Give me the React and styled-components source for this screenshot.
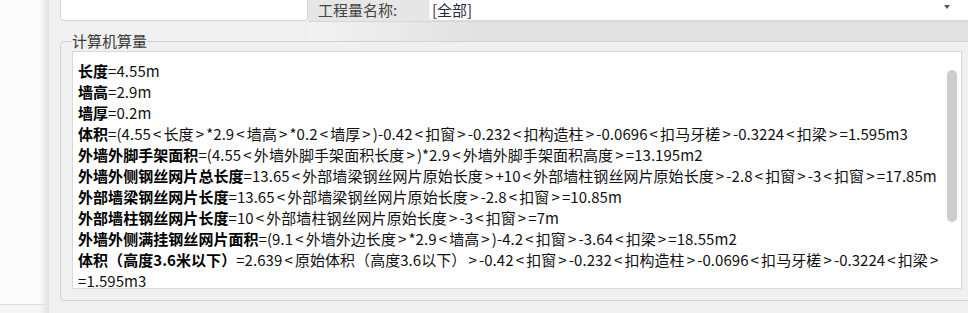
import React from 'react'
import styled, { createGlobalStyle } from 'styled-components'

const GlobalStyle = createGlobalStyle`
  html, body {
    margin: 0;
    padding: 0;
    background: #fafafa;
    font-family: "Noto Sans CJK SC", "Noto Sans", sans-serif;
  }
`

const lines = [
  ['长度', '=4.55m'],
  ['墙高', '=2.9m'],
  ['墙厚', '=0.2m'],
  ['体积', '=(4.55<长度>*2.9<墙高>*0.2<墙厚>)-0.42<扣窗>-0.232<扣构造柱>-0.0696<扣马牙槎>-0.3224<扣梁>=1.595m3'],
  ['外墙外脚手架面积', '=(4.55<外墙外脚手架面积长度>)*2.9<外墙外脚手架面积高度>=13.195m2'],
  ['外墙外侧钢丝网片总长度', '=13.65<外部墙梁钢丝网片原始长度>+10<外部墙柱钢丝网片原始长度>-2.8<扣窗>-3<扣窗>=17.85m'],
  ['外部墙梁钢丝网片长度', '=13.65<外部墙梁钢丝网片原始长度>-2.8<扣窗>=10.85m'],
  ['外部墙柱钢丝网片长度', '=10<外部墙柱钢丝网片原始长度>-3<扣窗>=7m'],
  ['外墙外侧满挂钢丝网片面积', '=(9.1<外墙外边长度>*2.9<墙高>)-4.2<扣窗>-3.64<扣梁>=18.55m2'],
  ['体积（高度3.6米以下）', '=2.639<原始体积（高度3.6以下）>-0.42<扣窗>-0.232<扣构造柱>-0.0696<扣马牙槎>-0.3224<扣梁>', '=1.595m3'],
]

// the source font draws < and > with wide side bearings
function Expr({ text }) {
  return text.split(/([<>])/).map((part, i) =>
    part === '<' || part === '>' ? <Angle key={i}>{part}</Angle> : part
  )
}

function App() {
  return (
    <>
      <GlobalStyle />
      <Page>
        <SidePane />
        <Dialog>
          <TopRow>
            <NameBox />
            <FieldLabel>工程量名称:</FieldLabel>
            <Select>
              <span>[全部]</span>
              <Caret />
            </Select>
          </TopRow>
          <BandRow>
            <Band />
          </BandRow>
          <Group>
            <Legend>计算机算量</Legend>
            <TextArea>
              <Content>
                {lines.map(([label, expr, tail]) => (
                  <React.Fragment key={label + expr}>
                    <Line>
                      <b>{label}</b>
                      <Expr text={expr} />
                    </Line>
                    {tail && <Line>{tail}</Line>}
                  </React.Fragment>
                ))}
              </Content>
              <ScrollTrack>
                <Thumb />
              </ScrollTrack>
            </TextArea>
          </Group>
        </Dialog>
      </Page>
    </>
  )
}

const Page = styled.div`
  display: flex;
  width: 968px;
  height: 313px;
  overflow: hidden;
`

const SidePane = styled.div`
  width: 48px;
  flex-shrink: 0;
  background:
    linear-gradient(90deg, rgba(251, 251, 251, 0) 39px, #e4e4e4 48px),
    linear-gradient(#fbfbfb 304px, #dcdcdc 304px, #dcdcdc 305px, #f6f6f6 305px);
`

const Dialog = styled.div`
  flex: 1;
  min-width: 0;
  display: flex;
  flex-direction: column;
  background: #f0f0f0;
  padding-left: 12px;
  border-left: 1px solid #e2e2e2;
`

const TopRow = styled.div`
  display: flex;
  align-items: stretch;
  height: 21px;
`

const NameBox = styled.div`
  width: 246px;
  margin-left: -1px;
  background: #fff;
  border: 1px solid #d6d6d6;
  border-top: none;
  border-radius: 0 0 4px 4px;
`

const FieldLabel = styled.div`
  width: 110px;
  padding: 1px 0 0 10px;
  font-size: 15px;
  line-height: 17px;
  color: #444;
  background: #e6e6e6;
`

const Select = styled.div`
  flex: 1;
  display: flex;
  justify-content: space-between;
  background: #fff;
  border-left: 1px solid #dcdcdc;
  border-bottom: 1px solid #dcdcdc;
  border-radius: 0 0 0 4px;
  padding: 1px 18px 0 3px;
  font-size: 15px;
  line-height: 17px;
  color: #1f2a44;
`

const Caret = styled.span`
  width: 0;
  height: 0;
  margin-top: 4px;
  border-left: 3px solid transparent;
  border-right: 3px solid transparent;
  border-top: 4px solid #555;
`

const BandRow = styled.div`
  display: flex;
  height: 21px;
  padding-left: 247px;
`

const Band = styled.div`
  flex: 1;
  background: linear-gradient(90deg, #f2f2f2, #e2e2e2 25%);
  border-top: 1px solid #d6d6d6;
  border-bottom: 1px solid #d6d6d6;
`

const Group = styled.fieldset`
  margin: -11px -20px 0 -1px;
  padding: 0 0 11px 11px;
  min-width: 0;
  border: 1px solid #d2d2d2;
  border-radius: 4px;
`

const Legend = styled.legend`
  padding: 0;
  font-size: 15px;
  line-height: 20px;
  color: #3a3a3a;
`

const TextArea = styled.div`
  display: flex;
  height: 236px;
  margin-right: 25px;
  background: #fff;
  border: 1px solid #d9d9d9;
`

const Content = styled.div`
  flex: 1;
  min-width: 0;
  padding: 8px 0 0 5px;
  overflow: hidden;
`

const Line = styled.div`
  font-size: 15px;
  line-height: 21px;
  color: #111;
  white-space: pre;
  letter-spacing: 0.05px;

  b {
    font-weight: 700;
    color: #000;
  }
`

const Angle = styled.span`
  margin: 0 2.1px;
`

const ScrollTrack = styled.div`
  width: 10px;
  padding: 18px 4px 0 0;
`

const Thumb = styled.div`
  height: 152px;
  background: #cdcdcd;
  border-radius: 5px;
`

export default App
